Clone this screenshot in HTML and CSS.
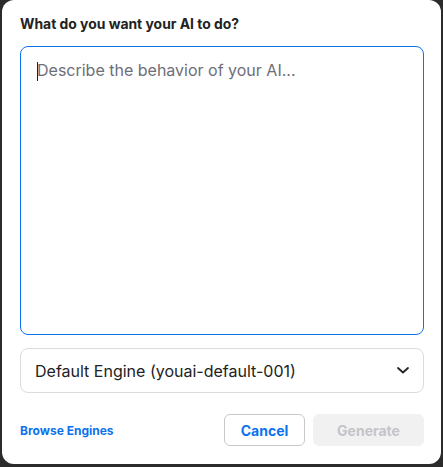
FILE: index.html
```html
<!DOCTYPE html>
<html lang="en">
<head>
<meta charset="utf-8">
<title>Create AI</title>
<link rel="stylesheet" href="styles.css">
</head>
<body>
<div class="dialog">
  <label class="heading" for="behavior">What do you want your AI to do?</label>
  <div class="field">
    <textarea id="behavior" class="textarea" placeholder="Describe the behavior of your AI..."></textarea>
    <span class="caret"></span>
  </div>
  <div class="select">
    <span class="select-text">Default Engine (youai-default-001)</span>
    <svg class="chevron" width="12" height="7" viewBox="0 0 12 7"><path d="M1 1l5 4.5L11 1" fill="none" stroke="#222" stroke-width="1.8" stroke-linecap="round" stroke-linejoin="round"/></svg>
  </div>
  <div class="footer">
    <a class="link" href="#">Browse Engines</a>
    <div class="actions">
      <button class="btn btn-cancel">Cancel</button>
      <button class="btn btn-generate" disabled>Generate</button>
    </div>
  </div>
</div>
</body>
</html>
```
FILE: styles.css
```css
html, body {
  margin: 0;
  padding: 0;
  background: #2b2b2b;
  height: 100%;
}
body {
  font-family: Inter, "Noto Sans", sans-serif;
  color: #232333;
}
.dialog {
  box-sizing: border-box;
  margin: 0 2px;
  height: 464px;
  background: #fff;
  border-radius: 12px;
  padding: 16px 17px 18px 18px;
  display: flex;
  flex-direction: column;
}
.heading {
  font-size: 13.9px;
  line-height: 16px;
  font-weight: 700;
  color: #222;
  margin-bottom: 14px;
}
.field {
  position: relative;
  height: 289px;
}
.textarea {
  box-sizing: border-box;
  display: block;
  width: 100%;
  height: 100%;
  margin: 0;
  border: 1px solid #0e72ed;
  border-radius: 8px;
  padding: 11px 16px;
  font-family: Inter, "Noto Sans", sans-serif;
  font-size: 16px;
  line-height: 24px;
  color: #222;
  resize: none;
  outline: none;
}
.textarea::placeholder {
  color: #6e6e78;
  opacity: 1;
}
.caret {
  position: absolute;
  left: 17px;
  top: 16px;
  width: 1px;
  height: 19px;
  background: #222;
}
.select {
  box-sizing: border-box;
  margin-top: 13px;
  height: 45px;
  border: 1px solid #dcdce0;
  border-radius: 8px;
  padding: 0 14px 0 14px;
  display: flex;
  align-items: center;
  justify-content: space-between;
}
.select-text {
  font-size: 16px;
  color: #222;
}
.chevron {
  display: block;
}
.footer {
  margin-top: 21px;
  display: flex;
  align-items: center;
  justify-content: space-between;
}
.link {
  font-size: 12px;
  font-weight: 700;
  color: #0e72ed;
  text-decoration: none;
}
.actions {
  display: flex;
  gap: 8px;
}
.btn {
  box-sizing: border-box;
  height: 32px;
  border-radius: 6px;
  font-family: Inter, "Noto Sans", sans-serif;
  font-size: 14px;
  font-weight: 700;
  padding: 0;
  margin: 0;
}
.btn-cancel {
  width: 81px;
  background: #fff;
  border: 1px solid #c8c8cc;
  color: #0e72ed;
}
.btn-generate {
  width: 111px;
  background: #f1f1f2;
  border: 1px solid #f1f1f2;
  color: #c4c4c8;
}
```
